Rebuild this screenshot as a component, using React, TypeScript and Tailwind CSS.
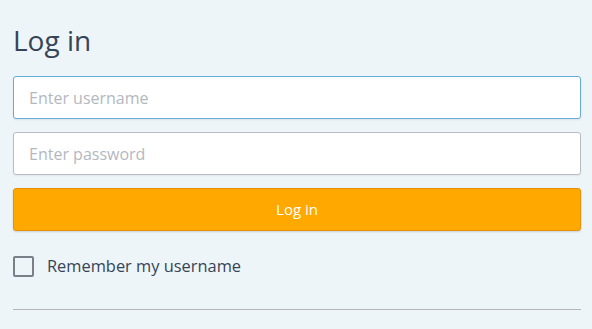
import React from 'react';

export default function App() {
  return (
    <div className="w-[592px] h-[329px] overflow-hidden bg-[#eef5f9] px-[13px] pt-[22px] font-['Open_Sans',sans-serif] text-[#364457]">
      {/* Title */}
      <h1 className="text-[28px] leading-[36px] font-normal text-[#364457]">Log in</h1>

      <form className="mt-[18px] flex w-[568px] flex-col gap-[13px]" onSubmit={e => e.preventDefault()}>
        <input
          type="text"
          autoFocus
          placeholder="Enter username"
          className="h-[43px] w-full rounded-[3px] border border-[#66acd9] bg-white px-[15px] text-[16px] text-[#364457] shadow-[0_1px_2px_rgba(0,0,0,0.08)] outline-none placeholder:text-[#b3b8bf]"
        />
        <input
          type="password"
          placeholder="Enter password"
          className="h-[43px] w-full rounded-[3px] border border-[#b8bdc4] bg-white px-[15px] text-[16px] text-[#364457] shadow-[0_1px_2px_rgba(0,0,0,0.06)] outline-none placeholder:text-[#b3b8bf]"
        />
        <button
          type="submit"
          className="h-[43px] w-full rounded-[3px] border border-[#e8900a] bg-[#ffa800] text-[15px] text-white shadow-[0_1px_2px_rgba(0,0,0,0.15)]"
        >
          Log in
        </button>
      </form>

      {/* Remember me */}
      <label className="mt-[23px] flex items-center gap-[13px]">
        <span className="h-[21px] w-[21px] rounded-[2px] border-2 border-[#7b8088] bg-transparent" />
        <span className="text-[16.4px] leading-[24px] text-[#364457]">Remember my username</span>
      </label>

      <div className="mt-[31px] h-px w-[568px] bg-[#b3b6ba]" />
    </div>
  );
}
